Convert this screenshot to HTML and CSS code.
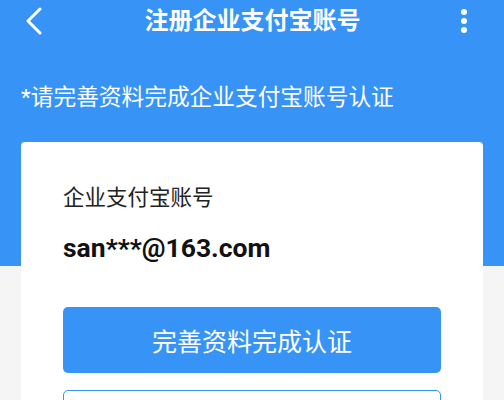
FILE: index.html
```html
<!DOCTYPE html>
<html lang="zh-CN">
<head>
<meta charset="utf-8">
<link rel="stylesheet" href="styles.css">
<title>注册企业支付宝账号</title>
</head>
<body>
<div class="page">
  <header class="nav">
    <svg class="back" width="18" height="28" viewBox="0 0 18 28" aria-hidden="true">
      <path d="M15 2 L3 14 L15 26" fill="none" stroke="#fff" stroke-width="3" stroke-linecap="round" stroke-linejoin="round"/>
    </svg>
    <h1 class="title">注册企业支付宝账号</h1>
    <svg class="more" width="8" height="26" viewBox="0 0 8 26" aria-hidden="true">
      <circle cx="4" cy="4" r="3" fill="#fff"/>
      <circle cx="4" cy="13" r="3" fill="#fff"/>
      <circle cx="4" cy="22" r="3" fill="#fff"/>
    </svg>
  </header>
  <p class="hint">*请完善资料完成企业支付宝账号认证</p>
  <section class="card">
    <div class="label">企业支付宝账号</div>
    <div class="account">san***@163.com</div>
    <button class="btn primary">完善资料完成认证</button>
    <button class="btn outline" aria-label="更换账号"></button>
  </section>
</div>
</body>
</html>
```

FILE: styles.css
```css
html, body {
  margin: 0;
  padding: 0;
}
body {
  width: 504px;
  height: 400px;
  overflow: hidden;
  font-family: Roboto, "Noto Sans CJK SC", sans-serif;
}
.page {
  height: 400px;
  overflow: hidden;
  background: linear-gradient(#3794f6 0, #3794f6 266px, #f5f5f5 266px);
}
.nav {
  height: 42px;
  display: flex;
  align-items: center;
  padding: 0 36px 0 25px;
}
.back {
  display: block;
}
.title {
  flex: 1;
  margin: 0;
  text-align: center;
  color: #fff;
  font-size: 24px;
  font-weight: 700;
  line-height: 42px;
  padding-left: 2px;
}
.more {
  display: block;
}
.hint {
  margin: 42px 0 0;
  padding-left: 21px;
  color: #fff;
  font-size: 22.7px;
  line-height: 28px;
}
.card {
  margin: 30px 21px 0;
  background: #fff;
  border-radius: 4px;
  padding: 42px 42px 0;
  height: 300px;
}
.label {
  font-size: 21.5px;
  line-height: 28px;
  color: #222;
}
.account {
  margin-top: 21px;
  font-size: 26.5px;
  font-weight: 700;
  line-height: 30px;
  color: #111;
}
.btn {
  display: block;
  width: 100%;
  height: 66px;
  border-radius: 5px;
  font-family: inherit;
  font-size: 25px;
  box-sizing: border-box;
}
.primary {
  margin-top: 44px;
  background: #3794f6;
  border: none;
  color: #fff;
}
.outline {
  margin-top: 17px;
  background: #fff;
  border: 1px solid #3794f6;
  color: #3794f6;
}
```
